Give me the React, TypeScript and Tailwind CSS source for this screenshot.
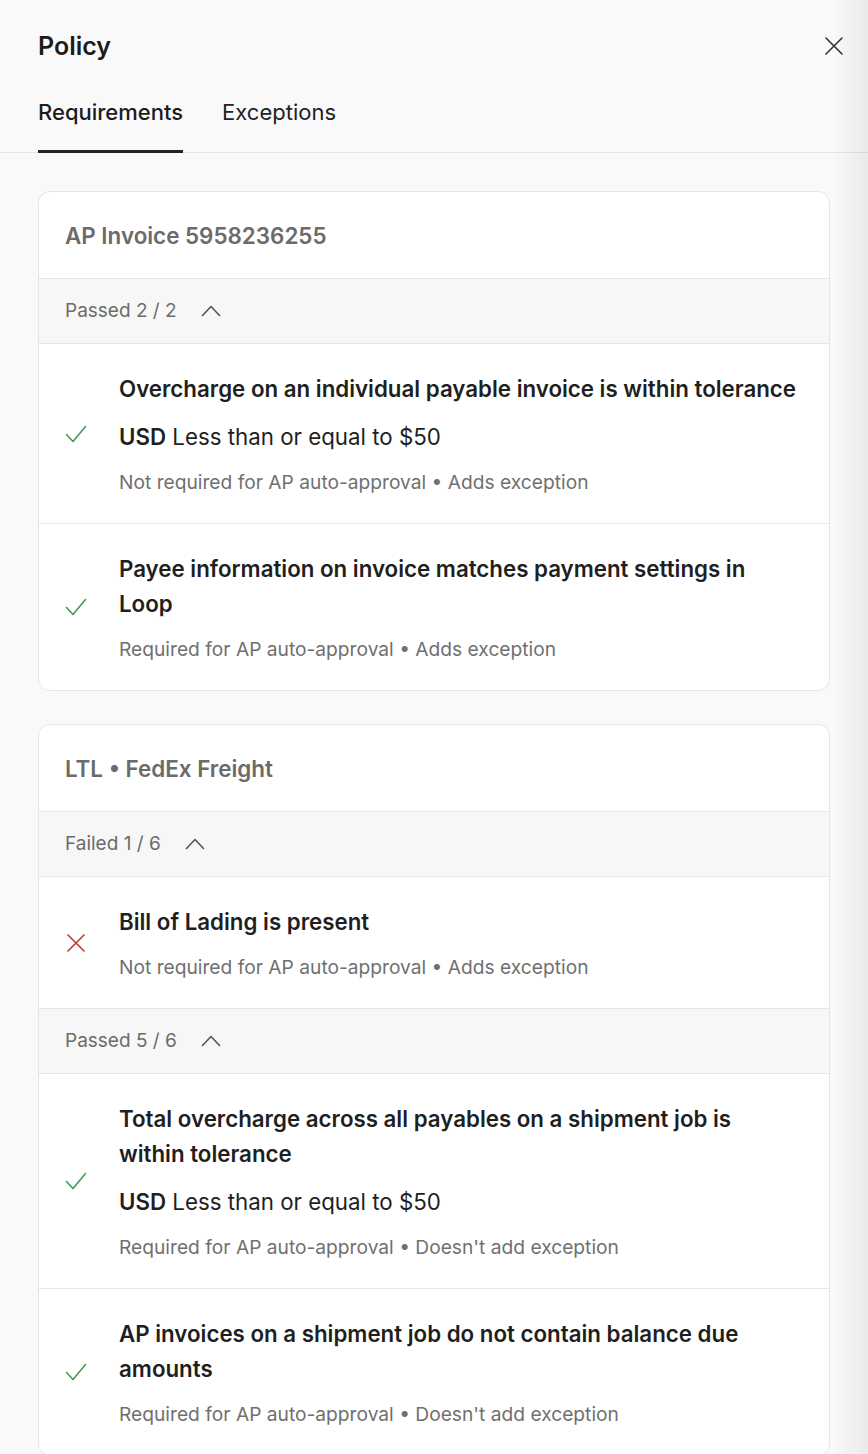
import React from "react";

type Rule = {
  status: "pass" | "fail";
  title: string;
  amount?: string;
  meta: string;
};

type Group = {
  label: string;
  rules: Rule[];
};

type Card = {
  heading: string;
  groups: Group[];
};

const cards: Card[] = [
  {
    heading: "AP Invoice 5958236255",
    groups: [
      {
        label: "Passed 2 / 2",
        rules: [
          {
            status: "pass",
            title: "Overcharge on an individual payable invoice is within tolerance",
            amount: "Less than or equal to $50",
            meta: "Not required for AP auto-approval • Adds exception",
          },
          {
            status: "pass",
            title: "Payee information on invoice matches payment settings in Loop",
            meta: "Required for AP auto-approval • Adds exception",
          },
        ],
      },
    ],
  },
  {
    heading: "LTL • FedEx Freight",
    groups: [
      {
        label: "Failed 1 / 6",
        rules: [
          {
            status: "fail",
            title: "Bill of Lading is present",
            meta: "Not required for AP auto-approval • Adds exception",
          },
        ],
      },
      {
        label: "Passed 5 / 6",
        rules: [
          {
            status: "pass",
            title: "Total overcharge across all payables on a shipment job is within tolerance",
            amount: "Less than or equal to $50",
            meta: "Required for AP auto-approval • Doesn't add exception",
          },
          {
            status: "pass",
            title: "AP invoices on a shipment job do not contain balance due amounts",
            meta: "Required for AP auto-approval • Doesn't add exception",
          },
        ],
      },
    ],
  },
];

const CheckIcon = () => (
  <svg width="22" height="18" viewBox="0 0 22 18" fill="none" stroke="#3f9b57" strokeWidth="1.6" strokeLinecap="round" strokeLinejoin="round">
    <path d="M1.5 9.5 L8 16.5 L20.5 1.5" />
  </svg>
);

const FailIcon = () => (
  <svg width="22" height="18" viewBox="0 0 22 18" fill="none" stroke="#c0392f" strokeWidth="1.6" strokeLinecap="round">
    <path d="M3 1 L19 17 M19 1 L3 17" />
  </svg>
);

const ChevronUp = () => (
  <svg width="20" height="12" viewBox="0 0 20 12" fill="none" stroke="#555" strokeWidth="1.6" strokeLinecap="round" strokeLinejoin="round">
    <path d="M1.5 10.5 L10 1.5 L18.5 10.5" />
  </svg>
);

const CloseIcon = () => (
  <svg width="18" height="18" viewBox="0 0 18 18" fill="none" stroke="#333" strokeWidth="1.6" strokeLinecap="round">
    <path d="M1 1 L17 17 M17 1 L1 17" />
  </svg>
);

const RuleRow = ({ rule }: { rule: Rule }) => (
  <div className="flex items-center border-t border-[#e6e6e6] px-[26px] py-[27px]">
    <div className="w-[22px] shrink-0 flex justify-center">
      {rule.status === "pass" ? <CheckIcon /> : <FailIcon />}
    </div>
    <div className="ml-[32px] flex-1 pr-[3px]">
      <div className="text-[22.3px] leading-[35px] font-semibold text-[#1f1f1f]">{rule.title}</div>
      {rule.amount && (
        <div className="mt-[13px] text-[22.3px] leading-[35px] text-[#1f1f1f]">
          <span className="font-semibold">USD</span> {rule.amount}
        </div>
      )}
      <div className="mt-[14px] text-[19.2px] leading-[28px] text-[#707070]">{rule.meta}</div>
    </div>
  </div>
);

const PolicyCard = ({ card }: { card: Card }) => (
  <div className="bg-white border border-[#e6e6e6] rounded-[12px] overflow-hidden">
    <div className="h-[86px] flex items-center px-[26px] pt-[2px] text-[22.4px] font-semibold text-[#6b6b6b]">
      {card.heading}
    </div>
    {card.groups.map((group) => (
      <div key={group.label}>
        <div className="h-[65px] flex items-center gap-[24px] px-[26px] bg-[#f7f7f7] border-t border-[#e6e6e6] text-[19px] text-[#6b6b6b]">
          <span>{group.label}</span>
          <ChevronUp />
        </div>
        {group.rules.map((rule) => (
          <RuleRow key={rule.title} rule={rule} />
        ))}
      </div>
    ))}
  </div>
);

export default function App() {
  return (
    <div className="relative min-h-[1454px] bg-[#f9f9f9] overflow-hidden" style={{ fontFamily: "Inter, 'Noto Sans', sans-serif" }}>
      {/* header */}
      <div className="border-b border-[#e4e4e4]">
        <div className="flex items-center justify-between pl-[38px] pr-[25px] pt-[30px]">
          <h1 className="text-[25px] leading-[32px] font-semibold text-[#1c1c1c]">Policy</h1>
          <button className="p-0">
            <CloseIcon />
          </button>
        </div>
        <div className="flex gap-[39px] px-[38px] mt-[36px]">
          <div className="pb-[23px] border-b-[3px] border-[#222] text-[22px] leading-[28px] font-medium text-[#1c1c1c] -mb-px">
            Requirements
          </div>
          <div className="pb-[26px] text-[22px] leading-[28px] text-[#222]">Exceptions</div>
        </div>
      </div>

      <div className="px-[38px] pt-[38px] flex flex-col gap-[33px]">
        {cards.map((card) => (
          <PolicyCard key={card.heading} card={card} />
        ))}
      </div>

      {/* soft shadow along the right edge of the drawer */}
      <div className="pointer-events-none absolute inset-y-0 right-0 w-[36px] bg-gradient-to-r from-transparent to-black/[0.06]" />
    </div>
  );
}
